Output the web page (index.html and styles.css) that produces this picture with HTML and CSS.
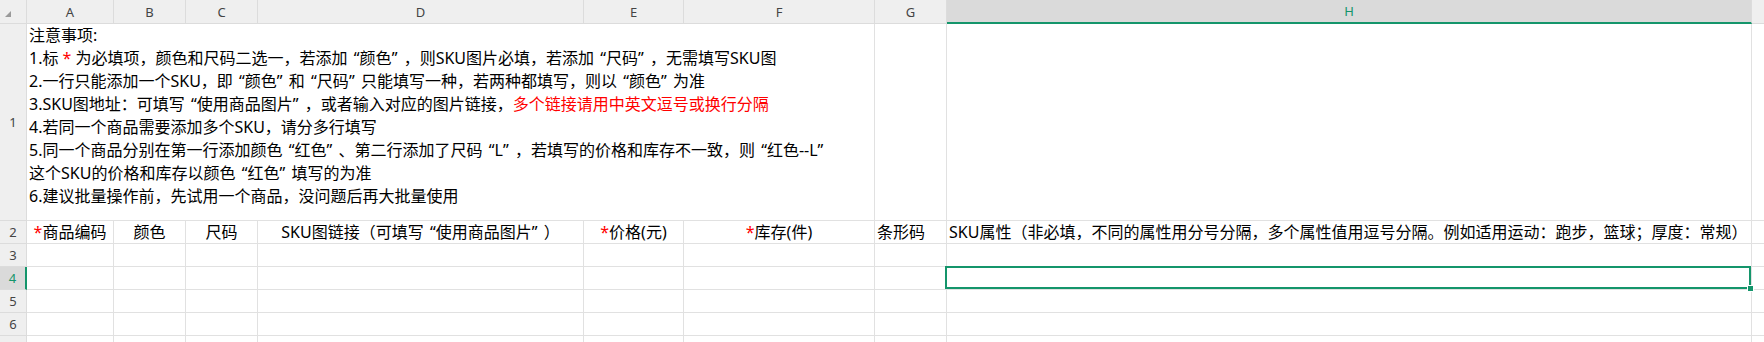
FILE: index.html
```html
<!DOCTYPE html>
<html lang="zh-CN">
<head>
  <meta charset="UTF-8" />
  <title>SKU导入模板</title>
  <link rel="stylesheet" href="styles.css">
</head>
<body>

<div class="sheet">
  <!-- column headers -->
  <div class="corner"><span class="tri"></span></div>
  <div class="col-head">A</div>
  <div class="col-head">B</div>
  <div class="col-head">C</div>
  <div class="col-head">D</div>
  <div class="col-head">E</div>
  <div class="col-head">F</div>
  <div class="col-head">G</div>
  <div class="col-head active">H</div>
  <div class="col-head blank"></div>

  <!-- row 1: notes, A:F merged -->
  <div class="row-head">1</div>
  <div class="cell notes">
    注意事项:<br>
    1.标 <span class="red">*</span> 为必填项，颜色和尺码二选一，若添加<span class="lq">“</span>颜色<span class="rq">”</span>，则SKU图片必填，若添加<span class="lq">“</span>尺码<span class="rq">”</span>，无需填写SKU图<br>
    2.一行只能添加一个SKU，即<span class="lq">“</span>颜色<span class="rq">”</span>和<span class="lq">“</span>尺码<span class="rq">”</span>只能填写一种，若两种都填写，则以<span class="lq">“</span>颜色<span class="rq">”</span>为准<br>
    3.SKU图地址：可填写<span class="lq">“</span>使用商品图片<span class="rq">”</span>，或者输入对应的图片链接，<span class="red">多个链接请用中英文逗号或换行分隔</span><br>
    4.若同一个商品需要添加多个SKU，请分多行填写<br>
    5.同一个商品分别在第一行添加颜色<span class="lq">“</span>红色<span class="rq">”</span>、第二行添加了尺码<span class="lq">“</span>L<span class="rq">”</span>，若填写的价格和库存不一致，则<span class="lq">“</span>红色--L<span class="rq">”</span><br>
    这个SKU的价格和库存以颜色<span class="lq">“</span>红色<span class="rq">”</span>填写的为准<br>
    6.建议批量操作前，先试用一个商品，没问题后再大批量使用
  </div>
  <div class="cell"></div>
  <div class="cell"></div>
  <div class="cell last"></div>

  <!-- row 2: column titles -->
  <div class="row-head">2</div>
  <div class="cell center"><span class="red">*</span>商品编码</div>
  <div class="cell center">颜色</div>
  <div class="cell center">尺码</div>
  <div class="cell center">SKU图链接（可填写<span class="lq">“</span>使用商品图片<span class="rq">”</span>）</div>
  <div class="cell center"><span class="red">*</span>价格(元)</div>
  <div class="cell center"><span class="red">*</span>库存(件)</div>
  <div class="cell">条形码</div>
  <div class="cell">SKU属性（非必填，不同的属性用分号分隔，多个属性值用逗号分隔。例如适用运动：跑步，篮球；厚度：常规）</div>
  <div class="cell last"></div>

  <div class="row-head">3</div>
  <div class="cell"></div><div class="cell"></div><div class="cell"></div><div class="cell"></div>
  <div class="cell"></div><div class="cell"></div><div class="cell"></div><div class="cell"></div>
  <div class="cell last"></div>

  <div class="row-head active">4</div>
  <div class="cell"></div><div class="cell"></div><div class="cell"></div><div class="cell"></div>
  <div class="cell"></div><div class="cell"></div><div class="cell"></div>
  <div class="cell selected"><span class="handle"></span></div>
  <div class="cell last"></div>

  <div class="row-head">5</div>
  <div class="cell"></div><div class="cell"></div><div class="cell"></div><div class="cell"></div>
  <div class="cell"></div><div class="cell"></div><div class="cell"></div><div class="cell"></div>
  <div class="cell last"></div>

  <div class="row-head">6</div>
  <div class="cell"></div><div class="cell"></div><div class="cell"></div><div class="cell"></div>
  <div class="cell"></div><div class="cell"></div><div class="cell"></div><div class="cell"></div>
  <div class="cell last"></div>

  <!-- row 7 is cut off by the window -->
  <div class="row-head"></div>
  <div class="cell"></div><div class="cell"></div><div class="cell"></div><div class="cell"></div>
  <div class="cell"></div><div class="cell"></div><div class="cell"></div><div class="cell"></div>
  <div class="cell last"></div>
</div>

</body>
</html>
```

FILE: styles.css
```css
body {
  margin: 0;
  background: #fff;
  overflow: hidden;
  font-family: "Noto Sans", "Noto Sans CJK SC", sans-serif;
  color: #000;
}

.sheet {
  display: grid;
  grid-template-columns: 27px 87px 72px 72px 326px 100px 191px 72px 805px 1fr;
  grid-template-rows: 24px 197px 23px 23px 23px 23px 23px 23px;
}

.sheet > div {
  box-sizing: border-box;
}

.corner,
.col-head,
.row-head {
  background: #efefef;
  color: #444;
  font-size: 13px;
  display: flex;
  align-items: center;
  justify-content: center;
  border-right: 1px solid #dcdcdc;
  border-bottom: 1px solid #dcdcdc;
}

.corner {
  position: relative;
}

.tri {
  position: absolute;
  left: 5px;
  top: 11px;
  width: 0;
  height: 0;
  border-left: 6px solid transparent;
  border-bottom: 6px solid #9a9a9a;
}

.col-head.active {
  background: #dadada;
  color: #14956b;
  border-bottom: 2px solid #14956b;
}

.col-head.blank {
  border-right: none;
}

.row-head.active {
  background: #dadada;
  color: #14956b;
  border-right: 2px solid #14956b;
}

.cell {
  font-size: 16px;
  line-height: 22px;
  padding: 0 2px;
  white-space: nowrap;
  display: flex;
  align-items: center;
  border-right: 1px solid #e1e1e1;
  border-bottom: 1px solid #e1e1e1;
}

.cell.center {
  justify-content: center;
}

.cell.last {
  border-right: none;
}

.notes {
  grid-column: span 6;
  display: block;
  line-height: 23px;
  padding-top: 0;
}

/* full-width-ish curly quotes, like the spreadsheet font draws them */
.lq,
.rq {
  display: inline-block;
  width: 12px;
}

.lq {
  text-align: right;
}

.rq {
  text-align: left;
}

.red {
  color: #ff0000;
}

.selected {
  position: relative;
}

.selected::after {
  content: "";
  position: absolute;
  top: -1px;
  left: -2px;
  right: 0;
  bottom: 0;
  border: 2px solid #14956b;
}

.handle {
  position: absolute;
  right: -3px;
  bottom: -3px;
  width: 5px;
  height: 5px;
  background: #14956b;
  border: 1px solid #fff;
  z-index: 2;
}
```
